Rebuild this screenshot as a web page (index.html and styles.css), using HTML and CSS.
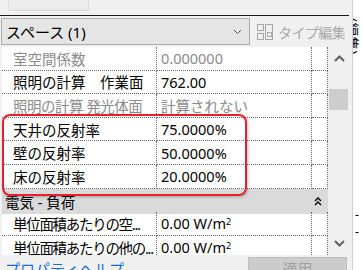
FILE: index.html
```html
<!DOCTYPE html>
<html lang="ja">
<head>
    <meta charset="UTF-8">
    <title>プロパティ</title>
    <link rel="stylesheet" href="styles.css">
</head>
<body>
<div class="app">
    <div class="palette">
        <div class="toolbar"><div class="tool-btn"></div></div>
        <div class="rule"></div>

        <div class="type-row">
            <div class="type-select">
                <span>スペース (1)</span>
                <svg class="select-arrow" width="9" height="6" viewBox="0 0 9 6"><path d="M1 1l3.5 3.5L8 1" fill="none" stroke="#555" stroke-width="1"/></svg>
            </div>
            <div class="type-edit">
                <svg width="17" height="16" viewBox="0 0 17 16">
                    <rect x="0.5" y="0.5" width="6" height="6" fill="none" stroke="#a8a8a8"/>
                    <rect x="0.5" y="9.5" width="6" height="6" fill="none" stroke="#a8a8a8"/>
                    <rect x="8.5" y="0.5" width="7" height="15" fill="none" stroke="#a8a8a8"/>
                    <rect x="10.5" y="8.5" width="4" height="4" fill="none" stroke="#a8a8a8"/>
                </svg>
                <span>タイプ編集</span>
            </div>
        </div>

        <div class="props-wrap">
            <div class="props">
                <div class="cell name muted">室空間係数</div>
                <div class="cell value muted">0.000000</div>
                <div class="cell end"></div>

                <div class="cell name">照明の計算　作業面</div>
                <div class="cell value">762.00</div>
                <div class="cell end"></div>

                <div class="cell name muted snug">照明の計算 発光体面</div>
                <div class="cell value muted">計算されない</div>
                <div class="cell end"></div>

                <div class="cell name">天井の反射率</div>
                <div class="cell value">75.0000%</div>
                <div class="cell end"></div>

                <div class="cell name">壁の反射率</div>
                <div class="cell value">50.0000%</div>
                <div class="cell end"></div>

                <div class="cell name">床の反射率</div>
                <div class="cell value">20.0000%</div>
                <div class="cell end"></div>

                <div class="group">
                    <span>電気 - 負荷</span>
                    <svg width="8" height="9" viewBox="0 0 8 9"><path d="M1 4l3-3 3 3M1 8l3-3 3 3" fill="none" stroke="#000" stroke-width="1.4"/></svg>
                </div>

                <div class="cell name tight">単位面積あたりの空...</div>
                <div class="cell value">0.00 W/m<sup>2</sup></div>
                <div class="cell end"></div>

                <div class="cell name tight">単位面積あたりの他の...</div>
                <div class="cell value">0.00 W/m<sup>2</sup></div>
                <div class="cell end"></div>
            </div>

            <div class="scrollbar">
                <svg class="arrow-up" width="11" height="7" viewBox="0 0 11 7"><path d="M1 6l4.5-4.5L10 6" fill="none" stroke="#606060" stroke-width="2"/></svg>
                <div class="thumb"></div>
                <svg class="arrow-down" width="11" height="7" viewBox="0 0 11 7"><path d="M1 1l4.5 4.5L10 1" fill="none" stroke="#606060" stroke-width="2"/></svg>
            </div>

            <!-- annotation over the reflectance rows -->
            <div class="highlight"></div>
        </div>

        <div class="footer">
            <a class="help-link">プロパティヘルプ</a>
            <div class="apply-btn">適用</div>
        </div>
    </div>

    <div class="side">
        <span class="side-title">(編集)</span>
        <span class="side-dash">- -</span>
    </div>
</div>
</body>
</html>
```

FILE: styles.css
```css
body {
    margin: 0;
    font-family: "Noto Sans", "Noto Sans CJK JP", sans-serif;
    font-size: 14.5px;
    color: #000;
    background-color: #fff;
    overflow: hidden;
}

.app {
    display: flex;
    width: 363px;
    height: 270px;
    overflow: hidden;
}

/* Properties palette */
.palette {
    width: 352px;
    flex-shrink: 0;
    background-color: #f0f0f0;
    display: flex;
    flex-direction: column;
    overflow: hidden;
}

.toolbar {
    height: 15px;
}

.tool-btn {
    margin-left: 8px;
    width: 79px;
    height: 10px;
    border: 1px solid #dcdcdc;
    border-top: none;
    background-color: #ececec;
}

.rule {
    width: 349px;
    border-top: 1px solid #1a1a1a;
}

.type-row {
    height: 31px;
    display: flex;
    align-items: center;
}

.type-select {
    margin-left: 1px;
    width: 249px;
    height: 27px;
    flex-shrink: 0;
    border: 1px solid #adadad;
    background-color: #e5e5e5;
    display: flex;
    align-items: center;
    justify-content: space-between;
    padding-left: 4px;
    padding-right: 7px;
    box-sizing: border-box;
    font-size: 15px;
}

.select-arrow {
    margin-top: 1px;
}

.type-edit {
    display: flex;
    align-items: center;
    gap: 4px;
    margin-left: 7px;
    color: #a8a8a8;
    font-size: 14px;
    letter-spacing: -0.6px;
    white-space: nowrap;
    flex-shrink: 0;
}

/* Property grid */
.props-wrap {
    position: relative;
    display: flex;
    height: 208px;
}

.props {
    margin-left: 2px;
    width: 326px;
    height: 208px;
    overflow: hidden;
    display: grid;
    grid-template-columns: 155px 155px 16px;
    grid-auto-rows: 23.6px;
    align-content: start;
    background-color: #fff;
}

.cell {
    border-bottom: 1px dotted #6a6a6a;
    border-right: 1px dotted #6a6a6a;
    display: flex;
    align-items: center;
    white-space: pre;
    overflow: hidden;
}

.name {
    padding-left: 11px;
}

.snug {
    letter-spacing: -0.5px;
}

.tight {
    letter-spacing: -1.3px;
}

.value {
    padding-left: 4px;
}

.muted {
    color: #8a8a8a;
}

.value sup {
    font-size: 9px;
    align-self: flex-start;
    margin-top: 3px;
}

.group {
    grid-column: 1 / -1;
    height: 25px;
    background-color: #dadada;
    display: flex;
    align-items: center;
    justify-content: space-between;
    padding-left: 3px;
    padding-right: 6px;
}

.scrollbar {
    width: 24px;
    display: flex;
    flex-direction: column;
    align-items: flex-start;
    padding-left: 1px;
    box-sizing: border-box;
}

.arrow-up {
    margin: 8px 0 0 5px;
}

.thumb {
    margin-top: 27px;
    width: 19px;
    height: 21px;
    background-color: #cdcdcd;
}

.arrow-down {
    margin: auto 0 8px 5px;
}

.highlight {
    position: absolute;
    left: 2px;
    top: 67px;
    width: 245px;
    height: 82px;
    border: 2px solid #e8202a;
    border-radius: 8px;
    box-sizing: border-box;
    box-shadow: 1px 1px 3px rgba(0, 0, 0, 0.25);
}

/* Bottom bar */
.footer {
    height: 15px;
    display: flex;
    align-items: flex-start;
}

.help-link {
    margin-left: 5px;
    margin-top: 3px;
    color: #1a6fd0;
    font-size: 15px;
    white-space: nowrap;
}

.apply-btn {
    margin-left: auto;
    margin-right: 5px;
    margin-top: 2px;
    width: 97px;
    height: 20px;
    border: 1px solid #bfbfbf;
    background-color: #cccccc;
    color: #a0a0a0;
    text-align: center;
    font-size: 15px;
    line-height: 22px;
}

/* Neighbouring panel */
.side {
    flex: 1;
    border-left: 1px solid #cfcfcf;
    background-color: #fff;
    display: flex;
    flex-direction: column;
    overflow: hidden;
}

.side-title {
    writing-mode: vertical-rl;
    text-orientation: sideways;
    margin-top: 18px;
    font-size: 14px;
}

.side-dash {
    margin-top: auto;
    margin-bottom: 30px;
    margin-left: 2px;
    font-size: 12px;
    letter-spacing: 1px;
}
```
